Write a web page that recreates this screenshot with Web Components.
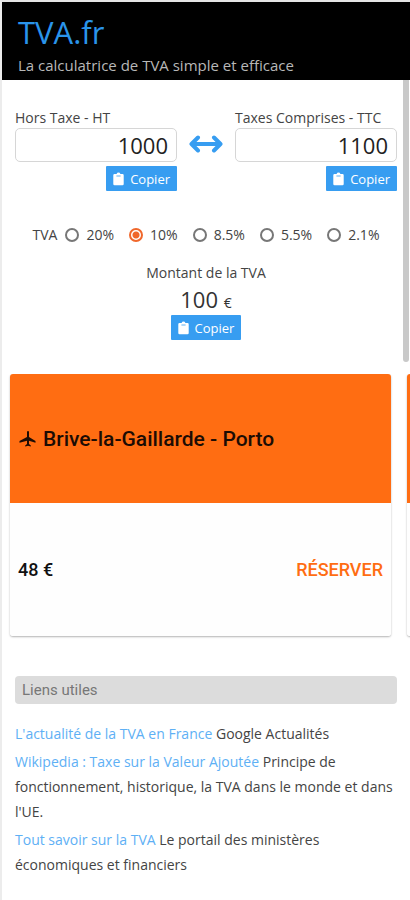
<!DOCTYPE html>
<html lang="fr">
<head>
<meta charset="utf-8">
<meta name="viewport" content="width=device-width, initial-scale=1">
<title>TVA.fr</title>
<style>
    body {
        margin: 0;
        background: #fff;
        color: #444;
        font-family: "Open Sans", "Noto Sans", sans-serif;
        font-size: 14px;
        line-height: 20px;
    }
</style>
</head>
<body>
<tva-app>
    <tva-header slot="header">
        TVA.fr
        <span slot="tagline">La calculatrice de TVA simple et efficace</span>
    </tva-header>
    <tva-calculator></tva-calculator>
    <flight-slider>
        <flight-card price="48 €">Brive-la-Gaillarde - Porto</flight-card>
        <flight-card></flight-card>
    </flight-slider>
    <useful-links heading="Liens utiles">
        <link-item href="#actualite" label="L'actualité de la TVA en France">Google Actualités</link-item>
        <link-item href="#wikipedia" label="Wikipedia : Taxe sur la Valeur Ajoutée">Principe de fonctionnement, historique, la TVA dans le monde et dans l'UE.</link-item>
        <link-item href="#portail" label="Tout savoir sur la TVA">Le portail des ministères économiques et financiers</link-item>
    </useful-links>
</tva-app>

<script>
class TvaApp extends HTMLElement {
    connectedCallback() {
        this.attachShadow({ mode: 'open' });
        this.shadowRoot.innerHTML = `
            <style>
                :host {
                    display: block;
                    box-sizing: border-box;
                    min-height: 100vh;
                    border-top: 2px solid #e4e4e4;
                    border-left: 2px solid #ececec;
                    overflow: hidden;
                }

                .content {
                    position: relative;
                }

                /* scroll thumb laid over the content */
                .thumb {
                    position: absolute;
                    top: 0;
                    right: 1px;
                    width: 6px;
                    height: 282px;
                    border-radius: 0 0 3px 3px;
                    background: #c9c9c9;
                }
            </style>

            <slot name="header"></slot>
            <main class="content">
                <slot></slot>
                <div class="thumb"></div>
            </main>
        `;
    }
}

class TvaHeader extends HTMLElement {
    connectedCallback() {
        this.attachShadow({ mode: 'open' });
        this.shadowRoot.innerHTML = `
            <style>
                :host {
                    display: block;
                    padding: 8px 16px 4px;
                    background: #000;
                    color: #b8b8b8;
                }

                h1 {
                    margin: 0;
                    color: #2a94ea;
                    font-size: 31px;
                    font-weight: 400;
                    line-height: 44px;
                }

                p {
                    margin: 0;
                    font-size: 15px;
                    line-height: 22px;
                }
            </style>

            <h1><slot></slot></h1>
            <p><slot name="tagline"></slot></p>
        `;
    }
}

class CopyButton extends HTMLElement {
    connectedCallback() {
        this.attachShadow({ mode: 'open' });
        this.shadowRoot.innerHTML = `
            <style>
                :host {
                    display: inline-flex;
                }

                button {
                    display: flex;
                    align-items: center;
                    gap: 6px;
                    height: 25px;
                    padding: 0 7px;
                    border: 0;
                    border-radius: 1px;
                    background: #379df1;
                    color: #fff;
                    font: inherit;
                    font-size: 13px;
                    cursor: pointer;
                }

                svg {
                    width: 11px;
                    height: 14px;
                }
            </style>

            <button type="button">
                <svg viewBox="0 0 11 14" aria-hidden="true">
                    <path fill="#fff" d="M1.5 2H3.6a2 2 0 0 1 3.8 0H9.5A1.2 1.2 0 0 1 10.7 3.2V12A1.2 1.2 0 0 1 9.5 13.2H1.5A1.2 1.2 0 0 1 .3 12V3.2A1.2 1.2 0 0 1 1.5 2Z"/>
                    <path fill="#379df1" d="M3.4 4.4h4.2v-.8H3.4z"/>
                </svg>
                <slot>Copier</slot>
            </button>
        `;
        this.shadowRoot.querySelector('button').addEventListener('click', () => {
            if (navigator.clipboard) navigator.clipboard.writeText(this.getAttribute('value') || '');
        });
    }
}

class TvaCalculator extends HTMLElement {
    connectedCallback() {
        const rates = ['20', '10', '8.5', '5.5', '2.1'];

        this.attachShadow({ mode: 'open' });
        this.shadowRoot.innerHTML = `
            <style>
                :host {
                    display: block;
                    padding: 28px 13px 34px;
                }

                .amounts {
                    display: grid;
                    grid-template-columns: 1fr 34px 1fr;
                    column-gap: 12px;
                    align-items: start;
                }

                .field {
                    display: flex;
                    flex-direction: column;
                    min-width: 0;
                }

                .field copy-button {
                    align-self: flex-end;
                    margin-top: 4px;
                }

                input[type="text"] {
                    box-sizing: border-box;
                    width: 100%;
                    height: 34px;
                    padding: 0 8px;
                    border: 1px solid #d6d6d6;
                    border-radius: 5px;
                    background: #fff;
                    color: #222;
                    font: inherit;
                    font-size: 22px;
                    text-align: right;
                }

                /* label height, then centred on the input */
                .arrows {
                    width: 34px;
                    height: 18px;
                    margin-top: 27px;
                }

                fieldset {
                    display: flex;
                    flex-wrap: wrap;
                    justify-content: center;
                    gap: 8px 15px;
                    margin: 34px 0 18px;
                    padding: 0;
                    border: 0;
                }

                .first {
                    display: flex;
                    gap: 8px;
                }

                .rate {
                    display: flex;
                    align-items: center;
                    gap: 7px;
                }

                input[type="radio"] {
                    appearance: none;
                    box-sizing: border-box;
                    width: 14px;
                    height: 14px;
                    margin: 0;
                    border: 2px solid #777;
                    border-radius: 50%;
                }

                input[type="radio"]:checked {
                    border-color: #f0672b;
                    background: radial-gradient(circle, #f0672b 3px, #fff 4px);
                }

                .total {
                    display: flex;
                    flex-direction: column;
                    align-items: center;
                }

                output {
                    color: #333;
                    font-size: 22px;
                    line-height: 32px;
                }

                small {
                    font-size: 14px;
                    line-height: 14px;
                }
            </style>

            <div class="amounts">
                <div class="field">
                    <label for="ht">Hors Taxe - HT</label>
                    <input type="text" inputmode="decimal" id="ht" value="1000">
                    <copy-button value="1000"></copy-button>
                </div>
                <svg class="arrows" viewBox="0 0 34 18" aria-hidden="true">
                    <path fill="none" stroke="#379df1" stroke-width="4" stroke-linecap="round" stroke-linejoin="round" d="M3 9H31M9 2.5L2.5 9L9 15.5M25 2.5L31.5 9L25 15.5"/>
                </svg>
                <div class="field">
                    <label for="ttc">Taxes Comprises - TTC</label>
                    <input type="text" inputmode="decimal" id="ttc" value="1100">
                    <copy-button value="1100"></copy-button>
                </div>
            </div>

            <fieldset aria-label="Taux de TVA">
                <div class="first">
                    <span>TVA</span>
                    ${this.rate(rates[0])}
                </div>
                ${rates.slice(1).map(r => this.rate(r)).join('')}
            </fieldset>

            <div class="total">
                <span>Montant de la TVA</span>
                <output for="ht ttc"><span id="amount">100</span> <small>€</small></output>
                <copy-button value="100"></copy-button>
            </div>
        `;

        this.shadowRoot.getElementById('ht').addEventListener('input', () => this.update('ht'));
        this.shadowRoot.getElementById('ttc').addEventListener('input', () => this.update('ttc'));
        this.shadowRoot.querySelector('fieldset').addEventListener('change', () => this.update('ht'));
    }

    rate(value) {
        return `<label class="rate"><input type="radio" name="rate" value="${value}"${value === '10' ? ' checked' : ''}>${value}%</label>`;
    }

    update(source) {
        const root = this.shadowRoot;
        const ht = root.getElementById('ht');
        const ttc = root.getElementById('ttc');
        const factor = 1 + Number(root.querySelector('input[name="rate"]:checked').value) / 100;
        const round = n => Math.round(n * 100) / 100 || 0;

        if (source === 'ht') ttc.value = round(parseFloat(ht.value) * factor);
        else ht.value = round(parseFloat(ttc.value) / factor);

        const amount = round(ttc.value - ht.value);
        root.getElementById('amount').textContent = amount;
        root.querySelectorAll('copy-button').forEach((button, i) => {
            button.setAttribute('value', [ht.value, ttc.value, amount][i]);
        });
    }
}

class FlightSlider extends HTMLElement {
    connectedCallback() {
        this.attachShadow({ mode: 'open' });
        this.shadowRoot.innerHTML = `
            <style>
                :host {
                    display: flex;
                    gap: 16px;
                    padding: 0 19px 4px 8px;
                    overflow: hidden;
                }

                ::slotted(*) {
                    flex: 0 0 100%;
                }
            </style>

            <slot></slot>
        `;
    }
}

class FlightCard extends HTMLElement {
    connectedCallback() {
        const price = this.getAttribute('price');

        this.attachShadow({ mode: 'open' });
        this.shadowRoot.innerHTML = `
            <style>
                :host {
                    display: grid;
                    grid-template-rows: 129px 133px;
                    border-radius: 3px;
                    box-shadow: 0 1px 2px rgba(0, 0, 0, 0.3);
                    overflow: hidden;
                    font-family: Roboto, sans-serif;
                    font-weight: 500;
                }

                .title {
                    display: flex;
                    align-items: center;
                    gap: 7px;
                    padding: 0 9px;
                    background: #ff6d12;
                    color: #1c0c04;
                    font-size: 21px;
                }

                svg {
                    width: 17px;
                    height: 17px;
                }

                .offer {
                    display: flex;
                    align-items: center;
                    justify-content: space-between;
                    padding: 0 8px;
                    background: #fefefe;
                    color: #111;
                    font-size: 18px;
                }

                a {
                    color: #ff6d12;
                    text-decoration: none;
                }
            </style>

            <div class="title">
                ${price ? `<svg viewBox="0 0 17 17" aria-hidden="true">
                    <path fill="#1c0c04" d="M9 1C9.7 1 10 1.6 10 2.3V7L16.5 11V12.8L10 10.8V14L11.8 15.4V16.6L9 15.8L6.2 16.6V15.4L8 14V10.8L.5 12.8V11L8 7V2.3C8 1.6 8.3 1 9 1Z"/>
                </svg>` : ''}
                <slot></slot>
            </div>
            <div class="offer">
                ${price ? `<span>${price}</span><a href="#reserver">RÉSERVER</a>` : ''}
            </div>
        `;
    }
}

class UsefulLinks extends HTMLElement {
    connectedCallback() {
        this.attachShadow({ mode: 'open' });
        this.shadowRoot.innerHTML = `
            <style>
                :host {
                    display: block;
                    padding: 36px 13px 16px;
                }

                h2 {
                    margin: 0 0 17px;
                    padding: 0 7px;
                    border-radius: 4px;
                    background: #dcdcdc;
                    color: #777;
                    font-family: Roboto, sans-serif;
                    font-size: 15px;
                    font-weight: 400;
                    line-height: 28px;
                }

                .list {
                    display: flex;
                    flex-direction: column;
                    gap: 3px;
                }
            </style>

            <h2>${this.getAttribute('heading')}</h2>
            <div class="list" role="list"><slot></slot></div>
        `;
    }
}

class LinkItem extends HTMLElement {
    connectedCallback() {
        this.setAttribute('role', 'listitem');
        this.attachShadow({ mode: 'open' });
        this.shadowRoot.innerHTML = `
            <style>
                :host {
                    display: block;
                    line-height: 25px;
                }

                a {
                    color: #5eb0f5;
                    text-decoration: none;
                }
            </style>

            <a href="${this.getAttribute('href')}">${this.getAttribute('label')}</a>
            <slot></slot>
        `;
    }
}

customElements.define('tva-app', TvaApp);
customElements.define('tva-header', TvaHeader);
customElements.define('copy-button', CopyButton);
customElements.define('tva-calculator', TvaCalculator);
customElements.define('flight-slider', FlightSlider);
customElements.define('flight-card', FlightCard);
customElements.define('useful-links', UsefulLinks);
customElements.define('link-item', LinkItem);
</script>
</body>
</html>
